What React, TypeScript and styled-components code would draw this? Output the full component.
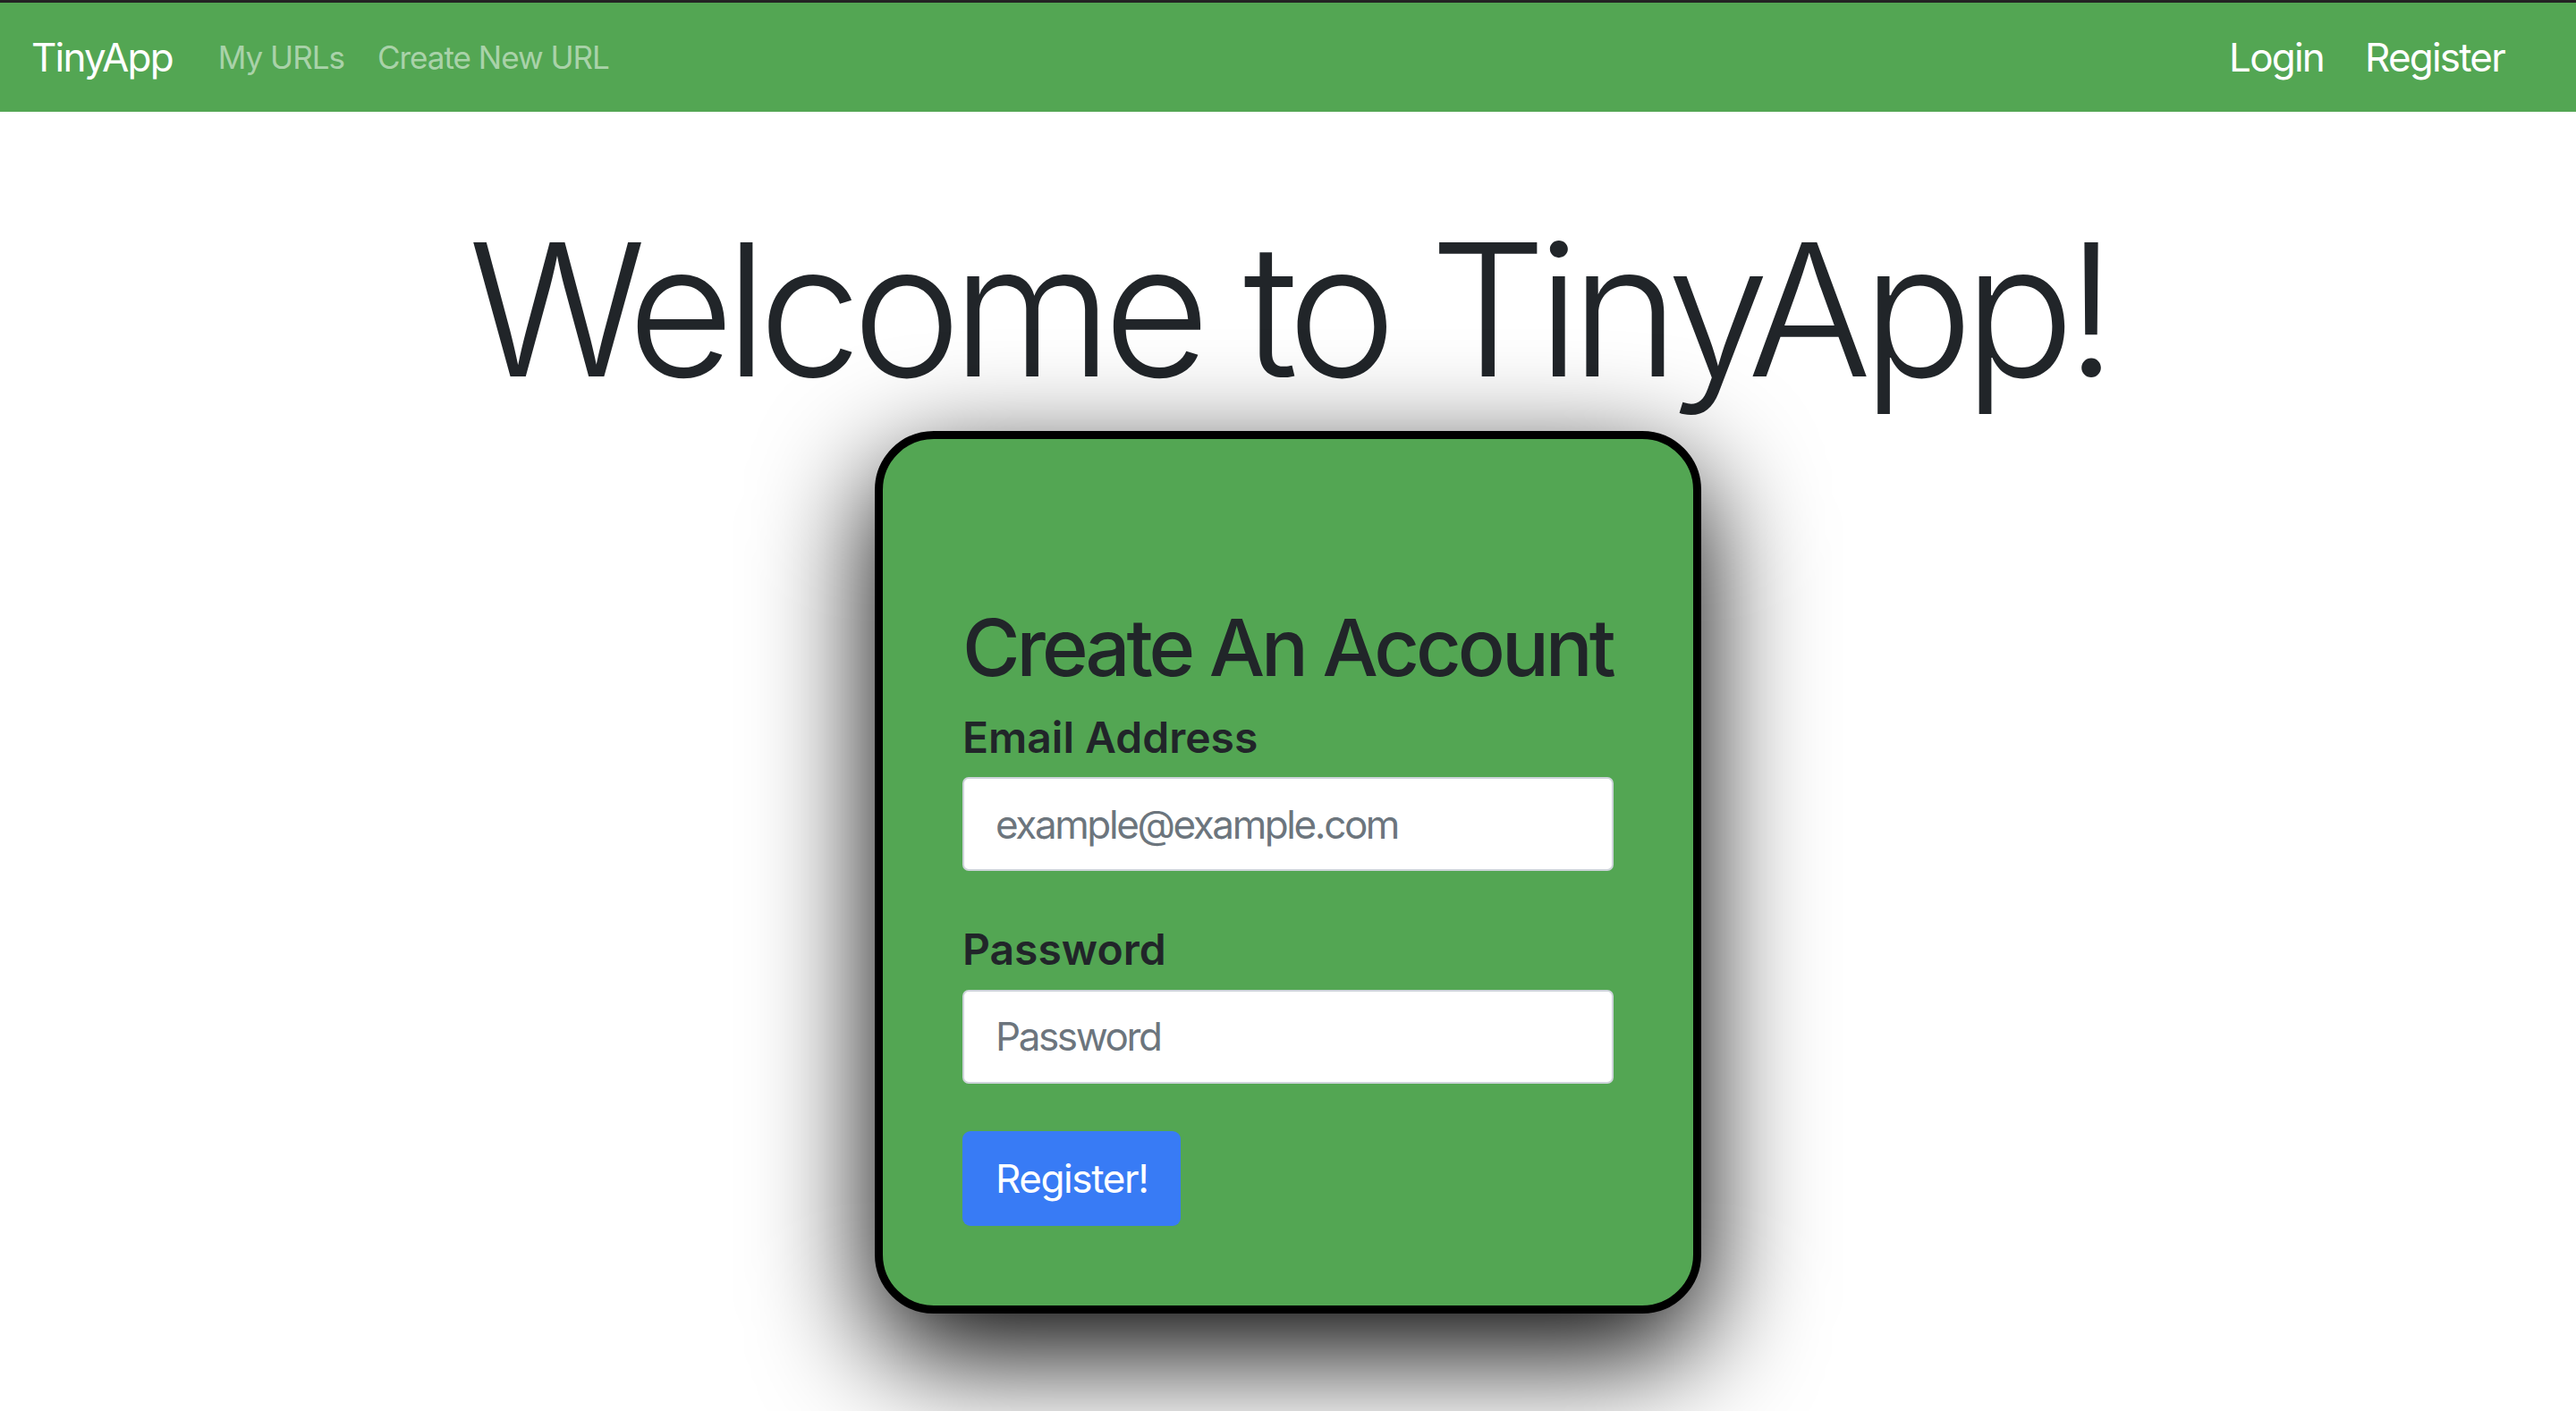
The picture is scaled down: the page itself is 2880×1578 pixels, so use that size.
import React from "react";
import styled, { createGlobalStyle } from "styled-components";

const GlobalStyle = createGlobalStyle`
  html, body {
    margin: 0;
    padding: 0;
    background: #ffffff;
    font-family: Inter, "Noto Sans", "Liberation Sans", sans-serif;
    color: #212529;
  }
  * { box-sizing: border-box; }
`;

const Page = styled.div`
  min-height: 1578px;
  overflow: hidden;
`;

const NavBar = styled.nav`
  height: 125px;
  border-top: 3px solid #232323;
  background: #53a653;
  display: flex;
  align-items: center;
  justify-content: space-between;
  padding: 0 80px 0 35px;
`;

const NavGroup = styled.div<{ $gap: number }>`
  display: flex;
  align-items: center;
  gap: ${(p) => p.$gap}px;
`;

const Brand = styled.a`
  font-size: 44px;
  color: #ffffff;
  text-decoration: none;
  line-height: 1.5;
  letter-spacing: -1.8px;
  margin-right: 14px;
`;

const NavLink = styled.a<{ $active?: boolean; $large?: boolean }>`
  font-size: ${(p) => (p.$large ? 44 : 35)}px;
  color: ${(p) => (p.$active ? "#ffffff" : "rgba(255,255,255,0.52)")};
  text-decoration: none;
  line-height: 1.5;
  letter-spacing: ${(p) => (p.$large ? -1.8 : -1)}px;
`;

const Main = styled.main`
  display: flex;
  flex-direction: column;
  align-items: center;
  padding-top: 98px;
`;

const Title = styled.h1`
  margin: 0 0 12px;
  font-size: 206px;
  font-weight: 300;
  line-height: 1.2;
  color: #212529;
  letter-spacing: -10.5px;
  white-space: nowrap;
`;

const Card = styled.section`
  width: 924px;
  border: 9px solid #000000;
  border-radius: 66px;
  background: #53a653;
  box-shadow: 0 44px 132px #000000;
  padding: 181px 89px 89px;
  display: flex;
  flex-direction: column;
`;

const CardTitle = styled.h2`
  margin: 0 0 18px;
  font-size: 88px;
  font-weight: 500;
  line-height: 1.2;
  color: #212529;
  letter-spacing: -4px;
  white-space: nowrap;
`;

const Field = styled.div<{ $last?: boolean }>`
  display: flex;
  flex-direction: column;
  gap: 16px;
  margin-bottom: ${(p) => (p.$last ? 53 : 59)}px;
`;

const Label = styled.label`
  font-size: 48px;
  font-weight: 600;
  line-height: 1.2;
  color: #212529;
  letter-spacing: 0;
`;

const Input = styled.input`
  height: 105px;
  width: 100%;
  border: 2px solid #ced4da;
  border-radius: 7px;
  background: #ffffff;
  padding: 0 35px;
  font-family: inherit;
  font-size: 44px;
  letter-spacing: -2.4px;
  color: #495057;
  outline: none;
  &::placeholder {
    color: #6c757d;
  }
`;

const Button = styled.button`
  align-self: flex-start;
  height: 106px;
  padding: 0 37px;
  border: none;
  border-radius: 9px;
  background: #387bf5;
  color: #ffffff;
  font-family: inherit;
  font-size: 44px;
  letter-spacing: -1.4px;
  line-height: 1;
  cursor: pointer;
`;

export default function App() {
  return (
    <Page>
      <GlobalStyle />
      <NavBar>
        <NavGroup $gap={37}>
          <Brand href="#">TinyApp</Brand>
          <NavLink href="#">My URLs</NavLink>
          <NavLink href="#">Create New URL</NavLink>
        </NavGroup>
        <NavGroup $gap={46}>
          <NavLink href="#" $active $large>
            Login
          </NavLink>
          <NavLink href="#" $active $large>
            Register
          </NavLink>
        </NavGroup>
      </NavBar>
      <Main>
        <Title>Welcome to TinyApp!</Title>
        <Card>
          <CardTitle>Create An Account</CardTitle>
          <Field>
            <Label htmlFor="email">Email Address</Label>
            <Input id="email" type="email" placeholder="example@example.com" />
          </Field>
          <Field $last>
            <Label htmlFor="password">Password</Label>
            <Input id="password" type="password" placeholder="Password" />
          </Field>
          <Button type="submit">Register!</Button>
        </Card>
      </Main>
    </Page>
  );
}
